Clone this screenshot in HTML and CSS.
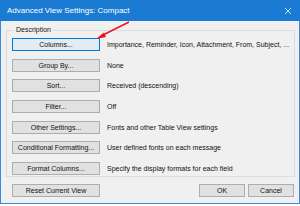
FILE: index.html
```html
<!DOCTYPE html>
<html>
<head>
<meta charset="utf-8">
<link rel="stylesheet" href="styles.css">
</head>
<body>
<div class="window">
  <div class="titlebar">
    <span class="title">Advanced View Settings: Compact</span>
    <svg class="close" width="8" height="8" viewBox="0 0 8 8"><path d="M1 1L7 7M7 1L1 7" stroke="#cfe3f7" stroke-width="1"/></svg>
  </div>
  <div class="body">
    <fieldset class="group">
      <legend>Description</legend>
      <div class="rows">
        <button class="btn focused">Columns...</button><span class="desc">Importance, Reminder, Icon, Attachment, From, Subject, ...</span>
        <button class="btn">Group By...</button><span class="desc">None</span>
        <button class="btn">Sort...</button><span class="desc">Received (descending)</span>
        <button class="btn">Filter...</button><span class="desc">Off</span>
        <button class="btn">Other Settings...</button><span class="desc">Fonts and other Table View settings</span>
        <button class="btn">Conditional Formatting...</button><span class="desc">User defined fonts on each message</span>
        <button class="btn">Format Columns...</button><span class="desc">Specify the display formats for each field</span>
      </div>
    </fieldset>
    <div class="footer">
      <button class="btn">Reset Current View</button>
      <div class="spacer"></div>
      <button class="btn small">OK</button>
      <button class="btn small">Cancel</button>
    </div>
  </div>
  <svg class="arrow" width="40" height="24" viewBox="0 0 40 24"><path d="M34 3L6 17" stroke="#e8141e" stroke-width="1.4" fill="none"/><path d="M1 20L9 13.5L11 18Z" fill="#e8141e"/></svg>
</div>
</body>
</html>
```
FILE: styles.css
```css
* { box-sizing: border-box; }
html, body { margin: 0; padding: 0; background: #ffffff; }
body { font-family: "Liberation Sans", Arial, sans-serif; font-size: 7px; color: #111111; }
.window {
  position: relative;
  width: 300px;
  height: 204px;
  background: #f0f0f0;
  border: 1px solid #3d8ad8;
  border-top: none;
  display: flex;
  flex-direction: column;
}
.titlebar {
  height: 21px;
  background: #1b7bd3;
  display: flex;
  align-items: center;
  padding: 0 8px 0 7px;
  margin: 0 -1px;
}
.title { color: #ffffff; font-size: 8px; flex: 1; }
.close { display: block; }
.body { flex: 1; display: flex; flex-direction: column; padding: 0 5px 0 5px; }
.group {
  margin: 4px 0 0 0;
  padding: 3px 5px 0 5px;
  border: 1px solid #dcdcdc;
  height: 152px;
}
.group legend { padding: 0 2px; margin-left: 2px; font-size: 7px; color: #111111; line-height: 10px; }
.rows {
  display: grid;
  grid-template-columns: 88px 1fr;
  column-gap: 7px;
  row-gap: 7.7px;
  align-items: center;
}
.btn {
  font-family: inherit;
  font-size: 7px;
  color: #111111;
  height: 13px;
  padding: 0;
  background: #e1e1e1;
  border: 1px solid #adadad;
  border-radius: 0;
  line-height: 11px;
  white-space: nowrap;
}
.btn.focused { border-color: #0078d7; background: #e3ebf3; }
.desc { white-space: nowrap; line-height: 11px; }
.footer { display: flex; align-items: center; margin-top: 7px; padding-left: 6px; gap: 3px; }
.footer .btn { width: 88px; }
.footer .btn.small { width: 46px; }
.spacer { flex: 1; }
.arrow { position: absolute; left: 94px; top: 19px; }
```
